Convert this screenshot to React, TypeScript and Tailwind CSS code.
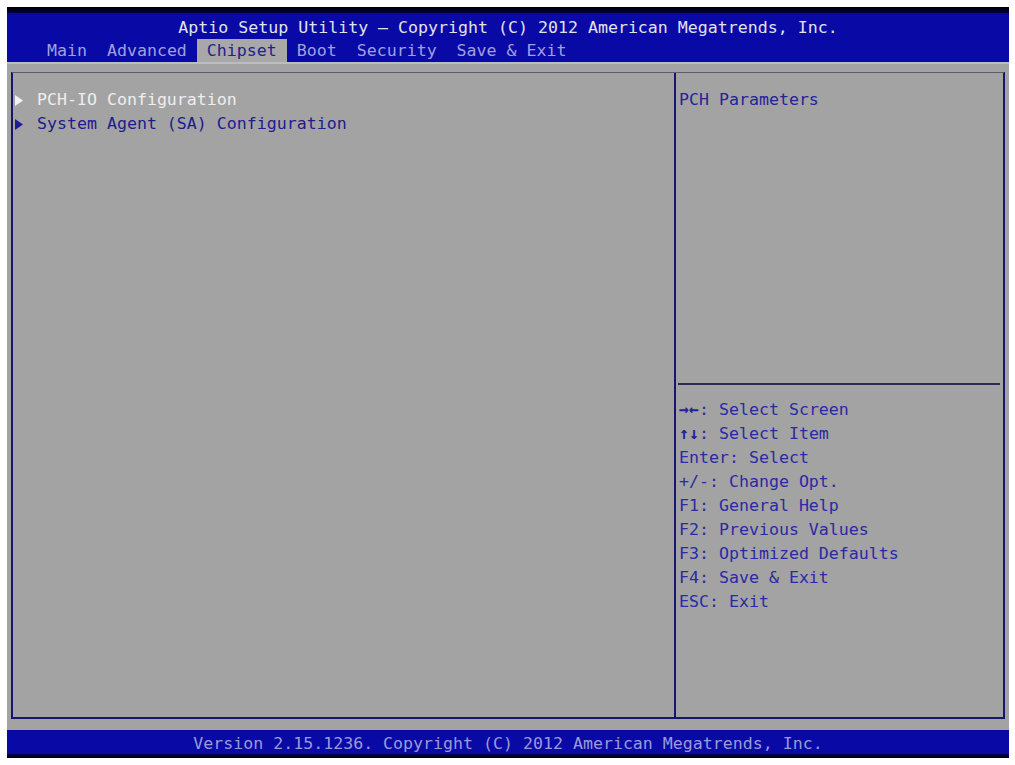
import React from "react";

const Arrow = ({ color }: { color: string }) => (
  <svg width="8" height="11" viewBox="0 0 8 11" className="shrink-0">
    <path d="M0 0 L8 5.5 L0 11 Z" fill={color} />
  </svg>
);

const help: [string, string][] = [
  ["→←", ": Select Screen"],
  ["↑↓", ": Select Item"],
  ["", "Enter: Select"],
  ["", "+/-: Change Opt."],
  ["", "F1: General Help"],
  ["", "F2: Previous Values"],
  ["", "F3: Optimized Defaults"],
  ["", "F4: Save & Exit"],
  ["", "ESC: Exit"],
];

export default function App() {
  return (
    <div
      className="w-[1015px] h-[765px] bg-white pt-[7px] pl-[7px] overflow-hidden"
      style={{ fontFamily: '"DejaVu Sans Mono", "Liberation Mono", monospace' }}
    >
      <div className="w-[1002px] flex flex-col text-[16.6px] leading-none whitespace-pre">
        {/* top dark band */}
        <div className="h-[6px] bg-gradient-to-b from-[#000008] to-[#00003a]" />
        {/* header */}
        <div className="h-[49px] bg-[#0909a6] flex flex-col">
          <div className="h-[26px] flex items-center justify-center pt-[5px] text-[#e2e2ea]">
            Aptio Setup Utility – Copyright (C) 2012 American Megatrends, Inc.
          </div>
          <div className="h-[23px] flex items-stretch pl-[40px] text-[#a0a0de]">
            <span className="flex items-center pt-[2px]">Main  Advanced </span>
            <span className="flex items-center pt-[2px] bg-[#a8a8a8] text-[#22228c]"> Chipset </span>
            <span className="flex items-center pt-[2px]"> Boot  Security  Save &amp; Exit</span>
          </div>
        </div>
        <div className="h-[2px] bg-[#bcbcc2]" />
        {/* body */}
        <div className="h-[666px] bg-[#a3a3a3] pt-[8px] pl-[4px] pr-[4px] pb-[11px]">
          <div className="h-full flex border-t border-t-[#5c5c74] border-l-2 border-r-2 border-b-2 border-l-[#16166a] border-r-[#16166a] border-b-[#16166a]">
            {/* left panel */}
            <div className="w-[663px] shrink-0 border-r-2 border-r-[#16166a] pt-[15px] flex flex-col">
              <div className="h-[24px] flex items-center pl-[2px]">
                <Arrow color="#f2f2f2" />
                <span className="ml-[14px] text-[#eeeeee]">PCH-IO Configuration</span>
              </div>
              <div className="h-[24px] flex items-center pl-[2px]">
                <Arrow color="#1c1c94" />
                <span className="ml-[14px] text-[#1c1c8e]">System Agent (SA) Configuration</span>
              </div>
            </div>
            {/* right panel */}
            <div className="flex-1 flex flex-col">
              <div className="h-[310px] pt-[15px] pl-[3px]">
                <div className="h-[24px] flex items-center text-[#24249a]">PCH Parameters</div>
              </div>
              <div className="h-[2px] bg-[#2c2c54] ml-[2px] mr-[3px]" />
              <div className="pt-[13px] pl-[3px] flex flex-col text-[#2a2aa4]">
                {help.map(([a, b], i) => (
                  <div key={i} className="h-[24px] flex items-center">
                    {a && <span className="font-bold text-[#22229a]">{a}</span>}
                    <span>{b}</span>
                  </div>
                ))}
              </div>
            </div>
          </div>
        </div>
        {/* bottom bar */}
        <div className="h-[24px] bg-[#0909a6] flex items-center justify-center pt-[4px] text-[#9a9ada]">
          Version 2.15.1236. Copyright (C) 2012 American Megatrends, Inc.
        </div>
        <div className="h-[4px] bg-gradient-to-b from-[#00005a] to-[#000008]" />
      </div>
    </div>
  );
}
